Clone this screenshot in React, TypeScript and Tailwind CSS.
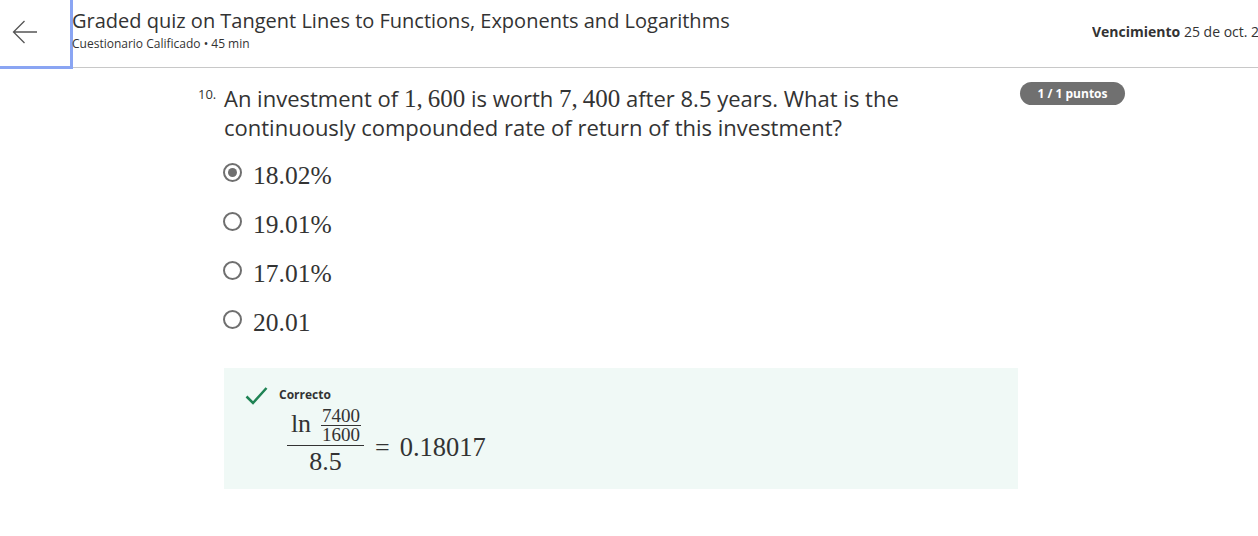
import React from "react";

const sans = { fontFamily: '"Open Sans", "Noto Sans", sans-serif' };
const serif = { fontFamily: '"Liberation Serif", "DejaVu Serif", serif' };

function Radio({ checked }: { checked?: boolean }) {
  return (
    <span className="flex h-[19px] w-[19px] shrink-0 items-center justify-center rounded-full border-2 border-[#6f6f6f] bg-white">
      {checked && <span className="h-[9px] w-[9px] rounded-full bg-[#6f6f6f]" />}
    </span>
  );
}

export default function App() {
  const options = ["18.02%", "19.01%", "17.01%", "20.01"];
  return (
    <div className="h-[536px] w-[1258px] overflow-hidden bg-white text-[#1f1f1f]" style={sans}>
      <header className="flex h-[69px] items-start">
        <button className="flex h-[69px] w-[73px] shrink-0 items-start justify-start border-b-[3px] border-r-[3px] border-[#8aa5f3] pl-[12px] pt-[19px]">
          <svg width="26" height="26" viewBox="0 0 26 26" fill="none" stroke="#555" strokeWidth="1.3">
            <path d="M25 13H1.5M12.5 2L1.5 13l11 11" />
          </svg>
        </button>
        <div className="flex h-[68px] flex-1 items-start justify-between border-b border-[#c8c8c8]">
          <div className="ml-[-1px] pt-[8px]">
            <div className="text-[20px] leading-[26px] text-[#333]">
              Graded quiz on Tangent Lines to Functions, Exponents and Logarithms
            </div>
            <div className="mt-[2px] text-[12px] leading-[16px] text-[#333]">Cuestionario Calificado • 45 min</div>
          </div>
          <div className="w-[166px] shrink-0 overflow-hidden whitespace-nowrap pt-[21px] text-[14px] text-[#333]">
            <span className="font-bold">Vencimiento</span> 25 de oct. 23:59 CST
          </div>
        </div>
      </header>

      <main className="flex pl-[198px] pt-[14px]">
        <div className="w-[822px]">
          <div className="flex">
            <span className="w-[26px] pt-[3px] text-[13px] leading-[16px] text-[#333]">10.</span>
            <p className="w-[760px] pt-[1px] text-[22px] leading-[29px] text-[#333]">
              An investment of <span className="text-[25px]" style={serif}>1,&thinsp;600</span> is worth{" "}
              <span className="text-[25px]" style={serif}>7,&thinsp;400</span> after 8.5 years. What is the continuously
              compounded rate of return of this investment?
            </p>
          </div>
          <div className="ml-[25px] mt-[16px] flex flex-col gap-[20px]">
            {options.map((o, i) => (
              <label key={o} className="flex h-[29px] items-center gap-[11px]">
                <Radio checked={i === 0} />
                <span className="pt-[6px] text-[25.5px] leading-[29px] text-[#333]" style={serif}>
                  {o}
                </span>
              </label>
            ))}
          </div>
          <div className="ml-[26px] mt-[34px] h-[121px] w-[794px] bg-[#f0f9f6] pl-[21px] pt-[18px]">
            <div className="flex items-start gap-[11px]">
              <svg width="23" height="20" viewBox="0 0 23 20" fill="none" stroke="#1f8354" strokeWidth="2.5">
                <path d="M1.5 10.5l6.5 6.5L21.5 2" />
              </svg>
              <span className="pt-[1px] text-[12px] font-bold leading-[16px] text-[#333]">Correcto</span>
            </div>
            <div className="ml-[42px] mt-[0px] flex items-center text-[#333]" style={serif}>
              <span className="inline-flex flex-col items-center">
                <span className="flex items-center gap-[10px] pb-[2px] pl-[1px]">
                  <span className="pb-[2px] text-[26px] leading-[28px]">ln</span>
                  <span className="inline-flex flex-col items-center text-[19px] leading-[19px]">
                    <span className="px-[1px]">7400</span>
                    <span className="h-px w-full bg-[#333]" />
                    <span className="px-[1px] leading-[17px]">1600</span>
                  </span>
                </span>
                <span className="h-px w-[77px] bg-[#333]" />
                <span className="pt-[1px] text-[26px] leading-[30px]">8.5</span>
              </span>
              <span className="ml-[11px] pt-[12px] text-[26px]">=</span>
              <span className="ml-[10px] pt-[12px] text-[26.5px]">0.18017</span>
            </div>
          </div>
        </div>
        <div className="mt-[-1px]">
          <span className="flex h-[23px] w-[105px] items-center justify-center rounded-full bg-[#707070] text-[12px] font-bold text-white">
            1 / 1 puntos
          </span>
        </div>
      </main>
    </div>
  );
}
